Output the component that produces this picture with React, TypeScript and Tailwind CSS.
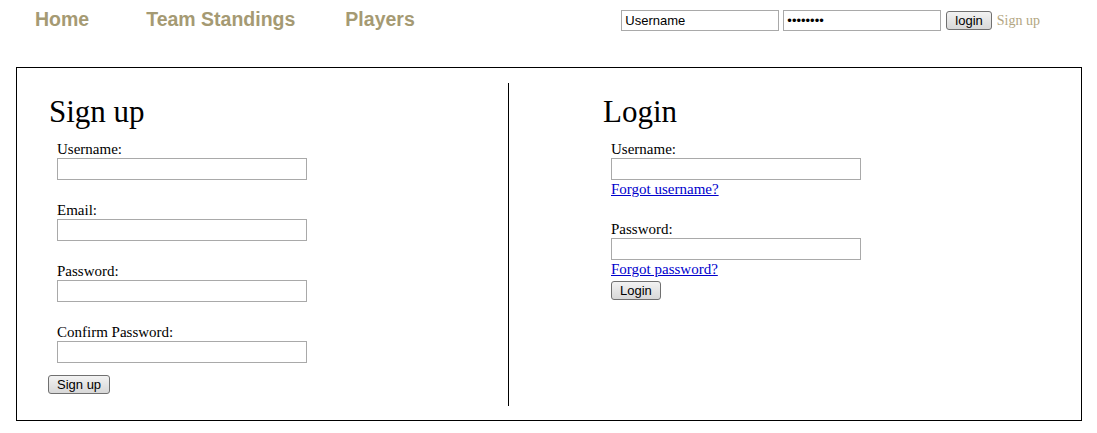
import React from "react";

const serif = "font-['Liberation_Serif','Times_New_Roman',serif]";
const sans = "font-['Liberation_Sans',Arial,sans-serif]";

function Field({ label, type = "text" }: { label: string; type?: string }) {
  return (
    <div className="flex flex-col">
      <label className="text-[15px] leading-[17px] text-black">{label}</label>
      <input
        type={type}
        className="w-[250px] h-[22px] border border-[#a9a9a9] bg-white outline-none"
      />
    </div>
  );
}

function Btn({ children }: { children: React.ReactNode }) {
  return (
    <button
      className={`${sans} h-[19px] px-[8px] text-[13px] leading-none text-black border border-[#707070] rounded-[3px] bg-gradient-to-b from-[#f2f2f2] to-[#d8d8d8]`}
    >
      {children}
    </button>
  );
}

export default function App() {
  return (
    <div className={`${serif} w-[1097px] h-[433px] bg-white`}>
      {/* top bar */}
      <div className="flex items-start h-[67px]">
        <nav className={`${sans} flex font-bold text-[19.5px] text-[#a59a73] pt-[5px] pl-[35px]`}>
          <a>Home</a>
          <a className="ml-[57px]">Team Standings</a>
          <a className="ml-[50px]">Players</a>
        </nav>
        <div className="flex items-center ml-auto mr-[57px] mt-[8px]">
          <input
            defaultValue="Username"
            className={`${sans} w-[158px] h-[21px] px-[3px] text-[13px] border border-[#a9a9a9] outline-none`}
          />
          <input
            type="password"
            defaultValue="password"
            className={`${sans} w-[158px] h-[21px] ml-[4px] px-[3px] text-[13px] border border-[#a9a9a9] outline-none`}
          />
          <div className="ml-[5px]">
            <Btn>login</Btn>
          </div>
          <a className="ml-[5px] text-[14px] text-[#b3a682]">Sign up</a>
        </div>
      </div>

      {/* main box */}
      <div className="ml-[16px] w-[1066px] h-[354px] border border-black flex pt-[15px]">
        <div className="w-[492px] h-[323px] border-r border-black pl-[32px]">
          <h1 className="text-[31px] leading-[36px] mt-[11px] text-black">Sign up</h1>
          <div className="ml-[8px] mt-[11px] flex flex-col gap-[22px]">
            <Field label="Username:" />
            <Field label="Email:" />
            <Field label="Password:" type="password" />
            <Field label="Confirm Password:" type="password" />
          </div>
          <div className="mt-[9px] -ml-[1px]">
            <Btn>Sign up</Btn>
          </div>
        </div>
        <div className="pl-[94px]">
          <h1 className="text-[31px] leading-[36px] mt-[11px] text-black">Login</h1>
          <div className="ml-[8px] mt-[11px] flex flex-col">
            <Field label="Username:" />
            <a className="text-[15px] leading-[19px] text-[#0000cc] underline">Forgot username?</a>
            <div className="mt-[22px]">
              <Field label="Password:" type="password" />
            </div>
            <a className="text-[15px] leading-[19px] text-[#0000cc] underline">Forgot password?</a>
            <div className="-mt-[1px]">
              <Btn>Login</Btn>
            </div>
          </div>
        </div>
      </div>
    </div>
  );
}
